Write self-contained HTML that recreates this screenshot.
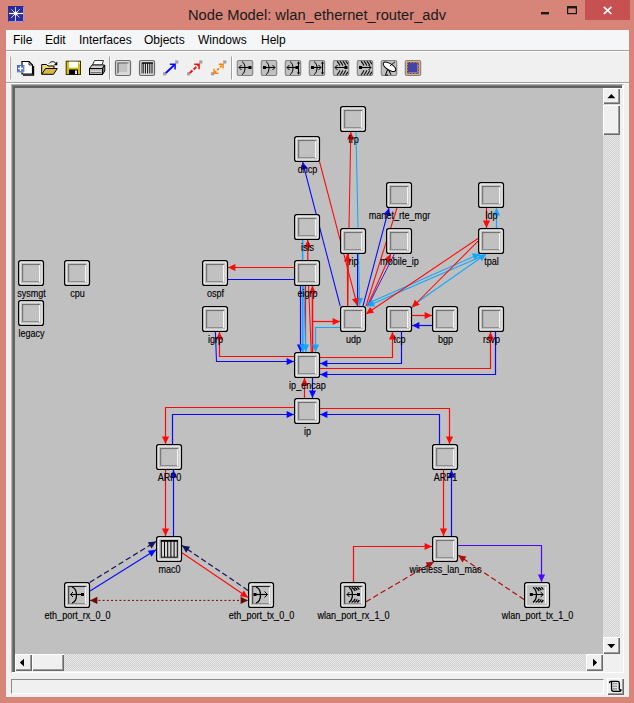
<!DOCTYPE html>
<html><head><meta charset="utf-8"><title>Node Model: wlan_ethernet_router_adv</title>
<style>
html,body{margin:0;padding:0}
body{width:634px;height:703px;overflow:hidden;background:#d68578;position:relative;font-family:"Liberation Sans",sans-serif}
.abs{position:absolute}
#title{left:0;top:6px;width:634px;text-align:center;font-size:14.7px;color:#1a1a1a;line-height:18px}
#client{left:6px;top:30px;width:623px;height:667px;background:#f0f0f0}
#menubar{left:6px;top:30px;width:623px;height:20px;background:#f5f6f7}
#menubar span{position:absolute;top:3px;font-size:12px;color:#000;line-height:14px}
#sep1{left:6px;top:50px;width:623px;height:1px;background:#a0a0a0}
#sep2{left:6px;top:51px;width:623px;height:1px;background:#fff}
#sep3{left:6px;top:82px;width:623px;height:1px;background:#a0a0a0}
#sep4{left:6px;top:83px;width:623px;height:1px;background:#fff}
#frame{left:11px;top:84px;width:613px;height:589px;box-sizing:border-box;border-top:1px solid #b0b0b0;border-left:1px solid #b0b0b0;border-right:1px solid #fff;border-bottom:1px solid #fff;background:#f0f0f0}
#frame2{left:12px;top:85px;width:610px;height:587px;box-sizing:border-box;border-top:1px solid #7c7c7c;border-left:1px solid #7c7c7c;background:#f0f0f0}
#frame3{left:13px;top:86px;width:609px;height:586px;box-sizing:border-box;border-top:2px solid #626262;border-left:2px solid #626262;background:#f0f0f0}
#canvas{left:15px;top:88px;width:588px;height:566px;background:#c0c0c0}
.track{background-color:#dcdcdc;background-image:conic-gradient(#e6e6e6 25%,#d2d2d2 0 50%,#e6e6e6 0 75%,#d2d2d2 0);background-size:2px 2px}
.btn{box-sizing:border-box;background:#f0f0f0;box-shadow:inset 1px 1px #fff,inset -1px -1px #6a6a6a,inset -2px -2px #9c9c9c}
#status{left:11px;top:679px;width:593px;height:15px;box-sizing:border-box;border-top:1px solid #8a8a8a;border-left:1px solid #8a8a8a;border-right:1px solid #fff;border-bottom:1px solid #fff;background:#f0f0f0}
svg text{font-family:"Liberation Sans",sans-serif;font-size:10.6px;fill:#000;stroke:#000;stroke-width:0.15px}
</style></head><body>
<div class="abs" id="title">Node Model: wlan_ethernet_router_adv</div>
<div class="abs" style="left:585px;top:0;width:45px;height:20px;background:#c75050"></div>
<svg class="abs" style="left:0;top:0" width="634" height="30" viewBox="0 0 634 30">
<rect x="8" y="6" width="16" height="16" fill="#2b2b9c"/><path d="M8.5,21.5 H23.5 V6.5" fill="none" stroke="#9a9ad8" stroke-width="1"/>
<path d="M9,13.5 H23" stroke="#fff" stroke-width="1.2"/><path d="M15.5,7 V21" stroke="#d0d0f0" stroke-width="1"/><path d="M11.5,9.5 L19.5,17.5 M19.8,9.2 L11.2,17.8" stroke="#e8e8ff" stroke-width="0.9"/><circle cx="15.6" cy="13.5" r="2" fill="#fff"/>
<rect x="541" y="12" width="8" height="2.4" fill="#1a1a1a"/>
<rect x="567.6" y="6.6" width="8.8" height="7" fill="none" stroke="#1a1a1a" stroke-width="1.2"/><rect x="567" y="6" width="10" height="2.4" fill="#1a1a1a"/>
<path d="M603.8,6.8 L611.4,14 M611.4,6.8 L603.8,14" stroke="#fff" stroke-width="1.7"/>
</svg>
<div class="abs" id="client"></div>
<div class="abs" id="menubar"><span style="left:7px">File</span><span style="left:39px">Edit</span><span style="left:73px">Interfaces</span><span style="left:138px">Objects</span><span style="left:192px">Windows</span><span style="left:255px">Help</span></div>
<div class="abs" id="sep1"></div><div class="abs" id="sep2"></div><div class="abs" id="sep3"></div><div class="abs" id="sep4"></div>
<!--TOOLBAR-->
<div class="abs" id="frame"></div><div class="abs" id="frame2"></div><div class="abs" id="frame3"></div>
<div class="abs" id="canvas"></div>
<div class="abs track" style="left:603px;top:88px;width:17px;height:566px"></div>
<div class="abs track" style="left:15px;top:654px;width:588px;height:17px"></div>
<div class="abs" style="left:603px;top:654px;width:17px;height:17px;background:#f0f0f0"></div>
<div class="abs btn" style="left:603px;top:88px;width:17px;height:16px"></div>
<div class="abs btn" style="left:603px;top:105px;width:17px;height:30px"></div>
<div class="abs btn" style="left:603px;top:637px;width:17px;height:17px"></div>
<div class="abs btn" style="left:15px;top:654px;width:17px;height:17px"></div>
<div class="abs btn" style="left:32px;top:654px;width:32px;height:17px"></div>
<div class="abs btn" style="left:586px;top:654px;width:17px;height:17px"></div>
<div class="abs" id="status"></div>
<div class="abs btn" style="left:607px;top:678px;width:17px;height:17px"></div>
<svg class="abs" style="left:0;top:0" width="634" height="703" viewBox="0 0 634 703">
<path d="M607.4,98.2 h8 l-4,-4.2z M607.3,644 h8 l-4,4.2z M24,658.8 v7.6 l-4.2,-3.8z M593,658.8 v7.6 l4.2,-3.8z" fill="#000"/>
<g transform="translate(0,0.7)"><path d="M611.5,681 C610,680.3 609.3,681.3 609.6,682.4 M611.5,680.7 H617.5 Q619.3,680.7 619.3,682.5 V688 Q619.3,689.8 621,689 Q621.2,690.6 619,690.6 H613.5 Q611.6,690.6 611.6,688.6 Z" fill="#e6e6e6" stroke="#000" stroke-width="1.3" stroke-linejoin="round"/>
<path d="M613.2,683 H617.6 M613.2,685.6 H617.6 M613.2,688.2 H617.6" stroke="#555" stroke-width="1.1" stroke-dasharray="1.4 0.8"/></g>
<path d="M10.5,56.5 V79.5" stroke="#a8a8a8" stroke-width="1"/><path d="M9.5,56.5 V79.5" stroke="#fff" stroke-width="1"/>
<path d="M109.5,56.5 V79.5" stroke="#a0a0a0" stroke-width="1"/><path d="M110.5,56.5 V79.5" stroke="#fff" stroke-width="1"/>
<path d="M231.5,56.5 V79.5" stroke="#a0a0a0" stroke-width="1"/><path d="M232.5,56.5 V79.5" stroke="#fff" stroke-width="1"/>
<path d="M22,61.5 H29 L32.5,65 V74 H22 Z" fill="#fff" stroke="#000" stroke-width="1.2"/><path d="M23,75.2 H33.6 V66" fill="none" stroke="#000" stroke-width="1.2"/><path d="M29,61.5 V65 H32.5" fill="none" stroke="#000" stroke-width="0.8"/>
<rect x="17" y="65" width="7" height="7" fill="#4a6ac8"/><path d="M17,72 H24 V65" stroke="#8aa0e0" fill="none" stroke-width="1"/><path d="M18,68.5 H23 M20.5,66 V71" stroke="#fff" stroke-width="1.4"/>
<path d="M41.7,74 V64.5 H46.5 L48,66 H54 V68.5" fill="#f0dc78" stroke="#000" stroke-width="1"/>
<path d="M41.7,74.3 L45.5,68.5 H57.3 L53.5,74.3 Z" fill="#d8b840" stroke="#000" stroke-width="1"/>
<path d="M49,63.5 C51,61 54.5,61 56.3,63.8" fill="none" stroke="#000" stroke-width="1"/><path d="M57.3,61.5 V65.2 H53.8 Z" fill="#000"/>
<rect x="66.2" y="61.2" width="14.3" height="13.3" fill="#d8bc10" stroke="#3a3000" stroke-width="1"/>
<rect x="69" y="61.7" width="9" height="6" fill="#fff"/><rect x="69" y="69.5" width="9" height="5" fill="#000"/><rect x="75" y="70.5" width="2" height="3.5" fill="#e8e8e8"/><rect x="78.8" y="62" width="1.2" height="1.5" fill="#fff"/>
<path d="M92.5,65 L94.5,60.5 H103.5 L102,65 Z" fill="#fff" stroke="#222" stroke-width="0.9"/>
<path d="M89.5,68.5 L92,65 H104.5 L102.5,68.5 Z" fill="#cfcfcf" stroke="#000" stroke-width="0.9"/>
<rect x="89.5" y="68.5" width="13" height="6" fill="#b8b8b8" stroke="#000" stroke-width="1"/><path d="M102.5,68.5 L104.8,65 V71 L102.5,74.5 Z" fill="#707070" stroke="#000" stroke-width="0.9"/><path d="M90.5,71.3 H101.5" stroke="#e4e4e4" stroke-width="0.9"/><path d="M90.5,72.5 H101.5" stroke="#666" stroke-width="0.9"/>
<rect x="115.5" y="60.5" width="15" height="15" rx="1.5" fill="#dadada" stroke="#6a6a6a" stroke-width="1.2"/><rect x="117.5" y="62.5" width="11" height="11" fill="#c2c2c2"/><path d="M118.0,73.5 V63 H128.5" fill="none" stroke="#585858" stroke-width="1.2"/><path d="M118.5,73 H128.0 V63.5" fill="none" stroke="#e8e8e8" stroke-width="1"/>
<rect x="139.5" y="60.5" width="15" height="15" rx="1.5" fill="#dadada" stroke="#6a6a6a" stroke-width="1.2"/><rect x="141.5" y="62.5" width="11" height="11" fill="#c2c2c2"/><path d="M142.0,73.5 V63 H152.5" fill="none" stroke="#585858" stroke-width="1.2"/><path d="M142.5,73 H152.0 V63.5" fill="none" stroke="#e8e8e8" stroke-width="1"/>
<rect x="142.5" y="63.5" width="10" height="10" fill="#dedede"/>
<path d="M143.2,63 V73.5" stroke="#000" stroke-width="0.95"/>
<path d="M145.4,63 V73.5" stroke="#000" stroke-width="0.95"/>
<path d="M147.6,63 V73.5" stroke="#000" stroke-width="0.95"/>
<path d="M149.8,63 V73.5" stroke="#000" stroke-width="0.95"/>
<path d="M152.0,63 V73.5" stroke="#000" stroke-width="0.95"/>
<path d="M142,63 H153" stroke="#000" stroke-width="1.2"/>
<rect x="163.0" y="72.2" width="3.2" height="3.2" fill="#a2a2a2"/><rect x="175.2" y="60.4" width="3.2" height="3.2" fill="#a2a2a2"/>
<path d="M165.8,73 L174.6,64.8" stroke="#0a0aff" stroke-width="1.9"/><path d="M169.8,64.3 H175.1 V69.6" fill="none" stroke="#0a0aff" stroke-width="1.5"/>
<rect x="187.0" y="72.2" width="3.2" height="3.2" fill="#a2a2a2"/><rect x="199.2" y="60.4" width="3.2" height="3.2" fill="#a2a2a2"/>
<path d="M189.8,73 L198.6,64.8" stroke="#ff0a0a" stroke-width="1.9" stroke-dasharray="3.6 1.6"/><path d="M194.2,64.3 H199.1 V69.2" fill="none" stroke="#ff0a0a" stroke-width="1.5"/>
<rect x="211.0" y="72.2" width="3.2" height="3.2" fill="#a2a2a2"/><rect x="223.2" y="60.4" width="3.2" height="3.2" fill="#a2a2a2"/>
<path d="M214.4,72.8 L222.8,64.8" stroke="#ff8000" stroke-width="1.8" stroke-dasharray="2.4 1.5"/><path d="M218.8,64.3 H223.1 V68.6" fill="none" stroke="#ff8000" stroke-width="1.4"/><path d="M214,68.8 V73.2 H218.4" fill="none" stroke="#ff8000" stroke-width="1.4"/>
<rect x="237.3" y="60.5" width="15.4" height="15" rx="1.5" fill="#c0c0c0" stroke="#808080" stroke-width="1.1"/><path d="M242.0,61.5 C246.0,64 246.0,72 242.0,74.8" fill="none" stroke="#000" stroke-width="1"/><path d="M239.0,67.5 H249.5" stroke="#000" stroke-width="1.1"/><path d="M241.5,65 L239.0,67.5 L241.5,70" fill="none" stroke="#000" stroke-width="1"/><rect x="248.5" y="66" width="3" height="3" fill="#000"/>
<rect x="261.3" y="60.5" width="15.4" height="15" rx="1.5" fill="#c0c0c0" stroke="#808080" stroke-width="1.1"/><path d="M266.0,61.5 C270.0,64 270.0,72 266.0,74.8" fill="none" stroke="#000" stroke-width="1"/><path d="M264.0,67.5 H275.0" stroke="#000" stroke-width="1.1"/><path d="M272.5,65 L275.0,67.5 L272.5,70" fill="none" stroke="#000" stroke-width="1"/><rect x="263.0" y="66" width="3" height="3" fill="#000"/>
<rect x="285.3" y="60.5" width="15.4" height="15" rx="1.5" fill="#c0c0c0" stroke="#808080" stroke-width="1.1"/><path d="M290.0,61.5 C294.0,64 294.0,72 290.0,74.8" fill="none" stroke="#000" stroke-width="1"/><path d="M287.0,67.5 H296.5" stroke="#000" stroke-width="1.1"/><path d="M289.5,65 L287.0,67.5 L289.5,70" fill="none" stroke="#000" stroke-width="1"/><rect x="295.5" y="66" width="3" height="3" fill="#000"/><path d="M298.5,62.5 V73.5" stroke="#000" stroke-width="1.1"/><path d="M297.0,63.5 l1.5,-2.2 l1.5,2.2z M297.0,72.5 l1.5,2.2 l1.5,-2.2z" fill="#000"/>
<rect x="309.3" y="60.5" width="15.4" height="15" rx="1.5" fill="#c0c0c0" stroke="#808080" stroke-width="1.1"/><path d="M314.0,61.5 C318.0,64 318.0,72 314.0,74.8" fill="none" stroke="#000" stroke-width="1"/><path d="M312.0,67.5 H321.0" stroke="#000" stroke-width="1.1"/><path d="M318.5,65 L321.0,67.5 L318.5,70" fill="none" stroke="#000" stroke-width="1"/><rect x="311.0" y="66" width="3" height="3" fill="#000"/><path d="M322.5,62.5 V73.5" stroke="#000" stroke-width="1.1"/><path d="M321.0,63.5 l1.5,-2.2 l1.5,2.2z M321.0,72.5 l1.5,2.2 l1.5,-2.2z" fill="#000"/>
<rect x="333.3" y="60.5" width="15.4" height="15" rx="1.5" fill="#c0c0c0" stroke="#808080" stroke-width="1.1"/><path d="M337.0,61.2 Q338.9,62.6 339.9,65.6" fill="none" stroke="#000" stroke-width="1.1"/><path d="M337.0,74.7 Q338.9,73.3 339.9,70.3" fill="none" stroke="#000" stroke-width="1.1"/><path d="M339.9,61.2 Q341.8,62.6 342.8,65.6" fill="none" stroke="#000" stroke-width="1.1"/><path d="M339.9,74.7 Q341.8,73.3 342.8,70.3" fill="none" stroke="#000" stroke-width="1.1"/><path d="M342.8,61.2 Q344.7,62.6 345.7,65.6" fill="none" stroke="#000" stroke-width="1.1"/><path d="M342.8,74.7 Q344.7,73.3 345.7,70.3" fill="none" stroke="#000" stroke-width="1.1"/><path d="M345.7,61.2 Q347.6,62.6 347.6,64.2" fill="none" stroke="#000" stroke-width="1.1"/><path d="M345.7,74.7 Q347.6,73.3 347.6,71.7" fill="none" stroke="#000" stroke-width="1.1"/><path d="M335.0,67.5 H345.5" stroke="#000" stroke-width="1.1"/><path d="M337.5,65 L335.0,67.5 L337.5,70" fill="none" stroke="#000" stroke-width="1"/><rect x="344.5" y="66" width="3" height="3" fill="#000"/>
<rect x="357.3" y="60.5" width="15.4" height="15" rx="1.5" fill="#c0c0c0" stroke="#808080" stroke-width="1.1"/><path d="M361.0,61.2 Q362.9,62.6 363.9,65.6" fill="none" stroke="#000" stroke-width="1.1"/><path d="M361.0,74.7 Q362.9,73.3 363.9,70.3" fill="none" stroke="#000" stroke-width="1.1"/><path d="M363.9,61.2 Q365.8,62.6 366.8,65.6" fill="none" stroke="#000" stroke-width="1.1"/><path d="M363.9,74.7 Q365.8,73.3 366.8,70.3" fill="none" stroke="#000" stroke-width="1.1"/><path d="M366.8,61.2 Q368.7,62.6 369.7,65.6" fill="none" stroke="#000" stroke-width="1.1"/><path d="M366.8,74.7 Q368.7,73.3 369.7,70.3" fill="none" stroke="#000" stroke-width="1.1"/><path d="M369.7,61.2 Q371.6,62.6 371.6,64.2" fill="none" stroke="#000" stroke-width="1.1"/><path d="M369.7,74.7 Q371.6,73.3 371.6,71.7" fill="none" stroke="#000" stroke-width="1.1"/><path d="M360.0,67.5 H371.0" stroke="#000" stroke-width="1.1"/><path d="M368.5,65 L371.0,67.5 L368.5,70" fill="none" stroke="#000" stroke-width="1"/><rect x="359.0" y="66" width="3" height="3" fill="#000"/>
<rect x="381.3" y="60.5" width="15.4" height="15" rx="1.5" fill="#c0c0c0" stroke="#808080" stroke-width="1.1"/>
<path d="M385.5,74.8 L388,68.5 L391,74.8" fill="none" stroke="#000" stroke-width="1"/><path d="M385,75 H388" stroke="#000" stroke-width="1"/>
<ellipse cx="389.5" cy="66.8" rx="7.2" ry="3.2" transform="rotate(32 389.5 66.8)" fill="#fff" stroke="#000" stroke-width="1"/><path d="M390,66 L395,61.8" stroke="#000" stroke-width="0.9"/>
<rect x="405.3" y="60.5" width="15.4" height="15" rx="1.5" fill="#c0c0c0" stroke="#808080" stroke-width="1.1"/>
<rect x="407" y="62" width="12" height="12" fill="#4444a4" stroke="#ff9a00" stroke-width="1.6" stroke-dasharray="1.6 1.4"/><path d="M408.5,72.5 H417.5 V63.5" fill="none" stroke="#7a7ad0" stroke-width="1"/>
<g id="diagram">
<polyline fill="none" stroke="#ff0808" stroke-width="1.05" points="347.5,306.0 350.8,132.0"/>
<polyline fill="none" stroke="#ff0808" stroke-width="1.4" points="347.7,306.0 347.5,254.0"/>
<polyline fill="none" stroke="#0808ff" stroke-width="1.2" points="357.6,254.0 357.6,306.0"/>
<polyline fill="none" stroke="#12a6ff" stroke-width="1.05" points="356.0,132.0 359.6,305.5"/>
<polyline fill="none" stroke="#0808ff" stroke-width="1.05" points="340.2,306.0 302.6,162.0"/>
<polyline fill="none" stroke="#ff0808" stroke-width="1.05" points="319.5,161.5 357.3,305.5"/>
<polyline fill="none" stroke="#0808ff" stroke-width="1.05" points="363.0,306.0 389.0,208.0"/>
<polyline fill="none" stroke="#ff0808" stroke-width="1.05" points="397.0,208.0 366.0,306.0"/>
<polyline fill="none" stroke="#ff0808" stroke-width="1.05" points="367.3,306.0 390.7,254.0"/>
<polyline fill="none" stroke="#3c1ee0" stroke-width="1" points="394.4,254.0 368.0,306.0"/>
<polyline fill="none" stroke="#12a6ff" stroke-width="1.05" points="366.5,304.0 480.0,253.8"/>
<polyline fill="none" stroke="#12a6ff" stroke-width="1.05" points="483.0,255.8 367.0,306.3"/>
<polyline fill="none" stroke="#12a6ff" stroke-width="1.05" points="412.0,306.0 486.0,254.0"/>
<polyline fill="none" stroke="#ff0808" stroke-width="1.05" points="478.0,238.5 366.0,314.0"/>
<polyline fill="none" stroke="#ff0808" stroke-width="1.05" points="478.0,241.2 412.0,307.5"/>
<polyline fill="none" stroke="#ff0808" stroke-width="1.2" points="486.5,208.0 486.5,228.0"/>
<polyline fill="none" stroke="#12a6ff" stroke-width="1.2" points="496.5,228.0 496.5,208.0"/>
<polyline fill="none" stroke="#0808ff" stroke-width="1.2" points="300.5,286.0 300.5,352.0"/>
<polyline fill="none" stroke="#12a6ff" stroke-width="1.5" points="302.6,240.0 302.9,352.0"/>
<polyline fill="none" stroke="#ff0808" stroke-width="1.2" points="307.8,260.0 307.8,240.0"/>
<polyline fill="none" stroke="#ff0808" stroke-width="1.2" points="305.5,286.0 305.5,345.0"/>
<polyline fill="none" stroke="#12a6ff" stroke-width="1.05" points="303.8,286.0 305.8,352.0"/>
<polyline fill="none" stroke="#ff0808" stroke-width="1.05" points="308.6,286.0 311.2,352.0"/>
<polyline fill="none" stroke="#ff0808" stroke-width="1.6" points="312.5,352.0 312.5,286.0"/>
<polyline fill="none" stroke="#ff0808" stroke-width="1.2" points="294.0,267.5 228.0,267.5"/>
<polyline fill="none" stroke="#0808ff" stroke-width="1.2" points="228.0,279.5 294.0,279.5"/>
<polyline fill="none" stroke="#ff0808" stroke-width="1.2" points="312.5,321.5 340.0,321.5"/>
<polyline fill="none" stroke="#12a6ff" stroke-width="1.2" points="340.0,327.5 315.5,327.5 315.5,352.0"/>
<polyline fill="none" stroke="#ff0808" stroke-width="1.2" points="294.0,356.5 219.5,356.5 219.5,332.0"/>
<polyline fill="none" stroke="#0808ff" stroke-width="1.05" points="215.4,332.0 216.5,361.5 294.0,361.5"/>
<polyline fill="none" stroke="#ff0808" stroke-width="1.2" points="320.0,357.5 392.5,357.5 392.5,332.0"/>
<polyline fill="none" stroke="#0808ff" stroke-width="1.2" points="401.5,332.0 401.5,363.5 320.0,363.5"/>
<polyline fill="none" stroke="#ff0808" stroke-width="1.2" points="320.0,368.5 490.5,368.5 490.5,332.0"/>
<polyline fill="none" stroke="#0808ff" stroke-width="1.2" points="495.5,332.0 495.5,374.5 320.0,374.5"/>
<polyline fill="none" stroke="#ff0808" stroke-width="1.2" points="412.0,315.5 432.0,315.5"/>
<polyline fill="none" stroke="#0808ff" stroke-width="1.2" points="432.0,325.5 412.0,325.5"/>
<polyline fill="none" stroke="#ff0808" stroke-width="1.2" points="304.5,398.0 304.5,378.0"/>
<polyline fill="none" stroke="#0808ff" stroke-width="1.2" points="312.5,378.0 312.5,398.0"/>
<polyline fill="none" stroke="#ff0808" stroke-width="1.2" points="294.0,407.5 165.5,407.5 165.5,444.0"/>
<polyline fill="none" stroke="#0808ff" stroke-width="1.2" points="172.5,444.0 172.5,414.5 294.0,414.5"/>
<polyline fill="none" stroke="#ff0808" stroke-width="1.2" points="320.0,408.5 449.5,408.5 449.5,444.0"/>
<polyline fill="none" stroke="#0808ff" stroke-width="1.2" points="439.5,444.0 439.5,414.5 320.0,414.5"/>
<polyline fill="none" stroke="#ff0808" stroke-width="1.2" points="165.5,470.0 165.5,536.0"/>
<polyline fill="none" stroke="#0808ff" stroke-width="1.2" points="173.5,536.0 173.5,470.0"/>
<polyline fill="none" stroke="#ff0808" stroke-width="1.2" points="443.5,470.0 443.5,536.0"/>
<polyline fill="none" stroke="#0808ff" stroke-width="1.2" points="451.5,536.0 451.5,470.0"/>
<polyline fill="none" stroke="#14145a" stroke-width="1.2" points="89.7,582.5 156.0,541.4" stroke-dasharray="5.5 3"/>
<polyline fill="none" stroke="#0808ff" stroke-width="1.05" points="90.0,591.0 156.0,549.8"/>
<polyline fill="none" stroke="#14145a" stroke-width="1.2" points="248.0,590.4 182.0,545.6" stroke-dasharray="5.5 3"/>
<polyline fill="none" stroke="#ff0808" stroke-width="1.05" points="182.0,552.7 248.0,597.5"/>
<polyline fill="none" stroke="#6a0a0a" stroke-width="1" points="90.0,600.4 248.0,600.4" stroke-dasharray="2 2.2"/>
<polyline fill="none" stroke="#ff0808" stroke-width="1.2" points="353.5,582.0 353.5,546.5 432.0,546.5"/>
<polyline fill="none" stroke="#b00c0c" stroke-width="1.15" points="366.0,601.7 433.8,561.8" stroke-dasharray="5.5 3"/>
<polyline fill="none" stroke="#4a08ff" stroke-width="1.2" points="458.0,545.5 541.5,545.5 541.5,582.0"/>
<polyline fill="none" stroke="#b00c0c" stroke-width="1.15" points="524.0,599.5 458.3,555.3" stroke-dasharray="5.5 3"/>
<polygon fill="#ff0808" points="350.8,132.0 354.3,139.5 347.1,139.3"/>
<polygon fill="#ff0808" points="347.5,254.0 351.1,261.4 343.9,261.4"/>
<polygon fill="#12a6ff" points="359.6,305.5 355.8,298.2 363.0,298.0"/>
<polygon fill="#0808ff" points="302.6,162.0 308.0,168.3 301.0,170.1"/>
<polygon fill="#ff0808" points="357.3,305.5 351.9,299.3 358.9,297.4"/>
<polygon fill="#0808ff" points="389.0,208.0 390.6,216.1 383.6,214.2"/>
<polygon fill="#ff0808" points="390.7,254.0 390.9,262.2 384.4,259.3"/>
<polygon fill="#12a6ff" points="480.0,253.8 474.7,260.1 471.8,253.5"/>
<polygon fill="#12a6ff" points="367.0,306.3 372.3,300.0 375.2,306.6"/>
<polygon fill="#12a6ff" points="486.0,254.0 482.0,261.2 477.9,255.3"/>
<polygon fill="#ff0808" points="366.0,314.0 370.1,306.9 374.1,312.8"/>
<polygon fill="#ff0808" points="412.0,307.5 414.7,299.7 419.8,304.8"/>
<polygon fill="#ff0808" points="486.5,228.0 482.9,220.6 490.1,220.6"/>
<polygon fill="#12a6ff" points="496.5,208.0 500.1,215.4 492.9,215.4"/>
<polygon fill="#0808ff" points="300.5,352.0 296.9,344.6 304.1,344.6"/>
<polygon fill="#12a6ff" points="302.9,352.0 299.3,344.6 306.5,344.6"/>
<polygon fill="#ff0808" points="307.8,240.0 311.4,247.4 304.2,247.4"/>
<polygon fill="#12a6ff" points="305.8,352.0 302.0,344.7 309.2,344.5"/>
<polygon fill="#ff0808" points="312.5,286.0 316.1,293.4 308.9,293.4"/>
<polygon fill="#ff0808" points="228.0,267.5 235.4,263.9 235.4,271.1"/>
<polygon fill="#ff0808" points="340.0,321.5 332.6,325.1 332.6,317.9"/>
<polygon fill="#12a6ff" points="315.5,352.0 311.9,344.6 319.1,344.6"/>
<polygon fill="#ff0808" points="219.5,332.0 223.1,339.4 215.9,339.4"/>
<polygon fill="#0808ff" points="294.0,361.5 286.6,365.1 286.6,357.9"/>
<polygon fill="#ff0808" points="392.5,332.0 396.1,339.4 388.9,339.4"/>
<polygon fill="#0808ff" points="320.0,363.5 327.4,359.9 327.4,367.1"/>
<polygon fill="#ff0808" points="490.5,332.0 494.1,339.4 486.9,339.4"/>
<polygon fill="#0808ff" points="320.0,374.5 327.4,370.9 327.4,378.1"/>
<polygon fill="#ff0808" points="432.0,315.5 424.6,319.1 424.6,311.9"/>
<polygon fill="#0808ff" points="412.0,325.5 419.4,321.9 419.4,329.1"/>
<polygon fill="#ff0808" points="304.5,378.0 308.1,385.4 300.9,385.4"/>
<polygon fill="#0808ff" points="312.5,398.0 308.9,390.6 316.1,390.6"/>
<polygon fill="#ff0808" points="165.5,444.0 161.9,436.6 169.1,436.6"/>
<polygon fill="#0808ff" points="294.0,414.5 286.6,418.1 286.6,410.9"/>
<polygon fill="#ff0808" points="449.5,444.0 445.9,436.6 453.1,436.6"/>
<polygon fill="#0808ff" points="320.0,414.5 327.4,410.9 327.4,418.1"/>
<polygon fill="#ff0808" points="165.5,536.0 161.9,528.6 169.1,528.6"/>
<polygon fill="#0808ff" points="173.5,470.0 177.1,477.4 169.9,477.4"/>
<polygon fill="#ff0808" points="443.5,536.0 439.9,528.6 447.1,528.6"/>
<polygon fill="#0808ff" points="451.5,470.0 455.1,477.4 447.9,477.4"/>
<polygon fill="#14145a" points="156.0,541.4 151.6,548.4 147.8,542.2"/>
<polygon fill="#0808ff" points="156.0,549.8 151.6,556.8 147.8,550.7"/>
<polygon fill="#14145a" points="182.0,545.6 190.1,546.8 186.1,552.7"/>
<polygon fill="#ff0808" points="248.0,597.5 239.9,596.3 243.9,590.4"/>
<polygon fill="#6a0a0a" points="248.0,600.4 240.6,604.0 240.6,596.8"/>
<polygon fill="#6a0a0a" points="90.0,600.4 97.4,596.8 97.4,604.0"/>
<polygon fill="#ff0808" points="432.0,546.5 424.6,550.1 424.6,542.9"/>
<polygon fill="#b00c0c" points="433.8,561.8 429.2,568.7 425.6,562.5"/>
<polygon fill="#4a08ff" points="541.5,582.0 537.9,574.6 545.1,574.6"/>
<polygon fill="#b00c0c" points="458.3,555.3 466.4,556.4 462.4,562.4"/>
<g transform="translate(340,106)"><rect x="0.65" y="0.65" width="24.8" height="24.8" rx="2.2" fill="#fff" stroke="#000" stroke-width="1.3"/><rect x="2.55" y="2.55" width="21" height="21" fill="#c1c1c1"/><rect x="4.2" y="4.1" width="1" height="17.9" fill="#6a6a6a"/><rect x="4.2" y="4.1" width="17.9" height="0.95" fill="#6a6a6a"/><rect x="5.2" y="21" width="16" height="0.95" fill="#8c8c8c"/><rect x="21.1" y="5.05" width="1.1" height="17" fill="#fafafa"/></g>
<g transform="translate(294,136)"><rect x="0.65" y="0.65" width="24.8" height="24.8" rx="2.2" fill="#fff" stroke="#000" stroke-width="1.3"/><rect x="2.55" y="2.55" width="21" height="21" fill="#c1c1c1"/><rect x="4.2" y="4.1" width="1" height="17.9" fill="#6a6a6a"/><rect x="4.2" y="4.1" width="17.9" height="0.95" fill="#6a6a6a"/><rect x="5.2" y="21" width="16" height="0.95" fill="#8c8c8c"/><rect x="21.1" y="5.05" width="1.1" height="17" fill="#fafafa"/></g>
<g transform="translate(386,182)"><rect x="0.65" y="0.65" width="24.8" height="24.8" rx="2.2" fill="#fff" stroke="#000" stroke-width="1.3"/><rect x="2.55" y="2.55" width="21" height="21" fill="#c1c1c1"/><rect x="4.2" y="4.1" width="1" height="17.9" fill="#6a6a6a"/><rect x="4.2" y="4.1" width="17.9" height="0.95" fill="#6a6a6a"/><rect x="5.2" y="21" width="16" height="0.95" fill="#8c8c8c"/><rect x="21.1" y="5.05" width="1.1" height="17" fill="#fafafa"/></g>
<g transform="translate(478,182)"><rect x="0.65" y="0.65" width="24.8" height="24.8" rx="2.2" fill="#fff" stroke="#000" stroke-width="1.3"/><rect x="2.55" y="2.55" width="21" height="21" fill="#c1c1c1"/><rect x="4.2" y="4.1" width="1" height="17.9" fill="#6a6a6a"/><rect x="4.2" y="4.1" width="17.9" height="0.95" fill="#6a6a6a"/><rect x="5.2" y="21" width="16" height="0.95" fill="#8c8c8c"/><rect x="21.1" y="5.05" width="1.1" height="17" fill="#fafafa"/></g>
<g transform="translate(294,214)"><rect x="0.65" y="0.65" width="24.8" height="24.8" rx="2.2" fill="#fff" stroke="#000" stroke-width="1.3"/><rect x="2.55" y="2.55" width="21" height="21" fill="#c1c1c1"/><rect x="4.2" y="4.1" width="1" height="17.9" fill="#6a6a6a"/><rect x="4.2" y="4.1" width="17.9" height="0.95" fill="#6a6a6a"/><rect x="5.2" y="21" width="16" height="0.95" fill="#8c8c8c"/><rect x="21.1" y="5.05" width="1.1" height="17" fill="#fafafa"/></g>
<g transform="translate(340,228)"><rect x="0.65" y="0.65" width="24.8" height="24.8" rx="2.2" fill="#fff" stroke="#000" stroke-width="1.3"/><rect x="2.55" y="2.55" width="21" height="21" fill="#c1c1c1"/><rect x="4.2" y="4.1" width="1" height="17.9" fill="#6a6a6a"/><rect x="4.2" y="4.1" width="17.9" height="0.95" fill="#6a6a6a"/><rect x="5.2" y="21" width="16" height="0.95" fill="#8c8c8c"/><rect x="21.1" y="5.05" width="1.1" height="17" fill="#fafafa"/></g>
<g transform="translate(386,228)"><rect x="0.65" y="0.65" width="24.8" height="24.8" rx="2.2" fill="#fff" stroke="#000" stroke-width="1.3"/><rect x="2.55" y="2.55" width="21" height="21" fill="#c1c1c1"/><rect x="4.2" y="4.1" width="1" height="17.9" fill="#6a6a6a"/><rect x="4.2" y="4.1" width="17.9" height="0.95" fill="#6a6a6a"/><rect x="5.2" y="21" width="16" height="0.95" fill="#8c8c8c"/><rect x="21.1" y="5.05" width="1.1" height="17" fill="#fafafa"/></g>
<g transform="translate(478,228)"><rect x="0.65" y="0.65" width="24.8" height="24.8" rx="2.2" fill="#fff" stroke="#000" stroke-width="1.3"/><rect x="2.55" y="2.55" width="21" height="21" fill="#c1c1c1"/><rect x="4.2" y="4.1" width="1" height="17.9" fill="#6a6a6a"/><rect x="4.2" y="4.1" width="17.9" height="0.95" fill="#6a6a6a"/><rect x="5.2" y="21" width="16" height="0.95" fill="#8c8c8c"/><rect x="21.1" y="5.05" width="1.1" height="17" fill="#fafafa"/></g>
<g transform="translate(202,260)"><rect x="0.65" y="0.65" width="24.8" height="24.8" rx="2.2" fill="#fff" stroke="#000" stroke-width="1.3"/><rect x="2.55" y="2.55" width="21" height="21" fill="#c1c1c1"/><rect x="4.2" y="4.1" width="1" height="17.9" fill="#6a6a6a"/><rect x="4.2" y="4.1" width="17.9" height="0.95" fill="#6a6a6a"/><rect x="5.2" y="21" width="16" height="0.95" fill="#8c8c8c"/><rect x="21.1" y="5.05" width="1.1" height="17" fill="#fafafa"/></g>
<g transform="translate(294,260)"><rect x="0.65" y="0.65" width="24.8" height="24.8" rx="2.2" fill="#fff" stroke="#000" stroke-width="1.3"/><rect x="2.55" y="2.55" width="21" height="21" fill="#c1c1c1"/><rect x="4.2" y="4.1" width="1" height="17.9" fill="#6a6a6a"/><rect x="4.2" y="4.1" width="17.9" height="0.95" fill="#6a6a6a"/><rect x="5.2" y="21" width="16" height="0.95" fill="#8c8c8c"/><rect x="21.1" y="5.05" width="1.1" height="17" fill="#fafafa"/></g>
<g transform="translate(202,306)"><rect x="0.65" y="0.65" width="24.8" height="24.8" rx="2.2" fill="#fff" stroke="#000" stroke-width="1.3"/><rect x="2.55" y="2.55" width="21" height="21" fill="#c1c1c1"/><rect x="4.2" y="4.1" width="1" height="17.9" fill="#6a6a6a"/><rect x="4.2" y="4.1" width="17.9" height="0.95" fill="#6a6a6a"/><rect x="5.2" y="21" width="16" height="0.95" fill="#8c8c8c"/><rect x="21.1" y="5.05" width="1.1" height="17" fill="#fafafa"/></g>
<g transform="translate(340,306)"><rect x="0.65" y="0.65" width="24.8" height="24.8" rx="2.2" fill="#fff" stroke="#000" stroke-width="1.3"/><rect x="2.55" y="2.55" width="21" height="21" fill="#c1c1c1"/><rect x="4.2" y="4.1" width="1" height="17.9" fill="#6a6a6a"/><rect x="4.2" y="4.1" width="17.9" height="0.95" fill="#6a6a6a"/><rect x="5.2" y="21" width="16" height="0.95" fill="#8c8c8c"/><rect x="21.1" y="5.05" width="1.1" height="17" fill="#fafafa"/></g>
<g transform="translate(386,306)"><rect x="0.65" y="0.65" width="24.8" height="24.8" rx="2.2" fill="#fff" stroke="#000" stroke-width="1.3"/><rect x="2.55" y="2.55" width="21" height="21" fill="#c1c1c1"/><rect x="4.2" y="4.1" width="1" height="17.9" fill="#6a6a6a"/><rect x="4.2" y="4.1" width="17.9" height="0.95" fill="#6a6a6a"/><rect x="5.2" y="21" width="16" height="0.95" fill="#8c8c8c"/><rect x="21.1" y="5.05" width="1.1" height="17" fill="#fafafa"/></g>
<g transform="translate(432,306)"><rect x="0.65" y="0.65" width="24.8" height="24.8" rx="2.2" fill="#fff" stroke="#000" stroke-width="1.3"/><rect x="2.55" y="2.55" width="21" height="21" fill="#c1c1c1"/><rect x="4.2" y="4.1" width="1" height="17.9" fill="#6a6a6a"/><rect x="4.2" y="4.1" width="17.9" height="0.95" fill="#6a6a6a"/><rect x="5.2" y="21" width="16" height="0.95" fill="#8c8c8c"/><rect x="21.1" y="5.05" width="1.1" height="17" fill="#fafafa"/></g>
<g transform="translate(478,306)"><rect x="0.65" y="0.65" width="24.8" height="24.8" rx="2.2" fill="#fff" stroke="#000" stroke-width="1.3"/><rect x="2.55" y="2.55" width="21" height="21" fill="#c1c1c1"/><rect x="4.2" y="4.1" width="1" height="17.9" fill="#6a6a6a"/><rect x="4.2" y="4.1" width="17.9" height="0.95" fill="#6a6a6a"/><rect x="5.2" y="21" width="16" height="0.95" fill="#8c8c8c"/><rect x="21.1" y="5.05" width="1.1" height="17" fill="#fafafa"/></g>
<g transform="translate(294,352)"><rect x="0.65" y="0.65" width="24.8" height="24.8" rx="2.2" fill="#fff" stroke="#000" stroke-width="1.3"/><rect x="2.55" y="2.55" width="21" height="21" fill="#c1c1c1"/><rect x="4.2" y="4.1" width="1" height="17.9" fill="#6a6a6a"/><rect x="4.2" y="4.1" width="17.9" height="0.95" fill="#6a6a6a"/><rect x="5.2" y="21" width="16" height="0.95" fill="#8c8c8c"/><rect x="21.1" y="5.05" width="1.1" height="17" fill="#fafafa"/></g>
<g transform="translate(294,398)"><rect x="0.65" y="0.65" width="24.8" height="24.8" rx="2.2" fill="#fff" stroke="#000" stroke-width="1.3"/><rect x="2.55" y="2.55" width="21" height="21" fill="#c1c1c1"/><rect x="4.2" y="4.1" width="1" height="17.9" fill="#6a6a6a"/><rect x="4.2" y="4.1" width="17.9" height="0.95" fill="#6a6a6a"/><rect x="5.2" y="21" width="16" height="0.95" fill="#8c8c8c"/><rect x="21.1" y="5.05" width="1.1" height="17" fill="#fafafa"/></g>
<g transform="translate(156,444)"><rect x="0.65" y="0.65" width="24.8" height="24.8" rx="2.2" fill="#fff" stroke="#000" stroke-width="1.3"/><rect x="2.55" y="2.55" width="21" height="21" fill="#c1c1c1"/><rect x="4.2" y="4.1" width="1" height="17.9" fill="#6a6a6a"/><rect x="4.2" y="4.1" width="17.9" height="0.95" fill="#6a6a6a"/><rect x="5.2" y="21" width="16" height="0.95" fill="#8c8c8c"/><rect x="21.1" y="5.05" width="1.1" height="17" fill="#fafafa"/></g>
<g transform="translate(432,444)"><rect x="0.65" y="0.65" width="24.8" height="24.8" rx="2.2" fill="#fff" stroke="#000" stroke-width="1.3"/><rect x="2.55" y="2.55" width="21" height="21" fill="#c1c1c1"/><rect x="4.2" y="4.1" width="1" height="17.9" fill="#6a6a6a"/><rect x="4.2" y="4.1" width="17.9" height="0.95" fill="#6a6a6a"/><rect x="5.2" y="21" width="16" height="0.95" fill="#8c8c8c"/><rect x="21.1" y="5.05" width="1.1" height="17" fill="#fafafa"/></g>
<g transform="translate(156,536)"><rect x="0.65" y="0.65" width="24.8" height="24.8" rx="2.2" fill="#fff" stroke="#000" stroke-width="1.3"/><rect x="2.55" y="2.55" width="21" height="21" fill="#c1c1c1"/><rect x="5.3" y="4.6" width="16" height="16.6" fill="#d6d6d6" stroke="#000" stroke-width="1"/><path d="M4.8,4.9 H21.8" stroke="#000" stroke-width="1.7"/><path d="M8.5,5 V21" stroke="#000" stroke-width="1"/><path d="M11.7,5 V21" stroke="#000" stroke-width="1"/><path d="M14.9,5 V21" stroke="#000" stroke-width="1"/><path d="M18.1,5 V21" stroke="#000" stroke-width="1"/></g>
<g transform="translate(432,536)"><rect x="0.65" y="0.65" width="24.8" height="24.8" rx="2.2" fill="#fff" stroke="#000" stroke-width="1.3"/><rect x="2.55" y="2.55" width="21" height="21" fill="#c1c1c1"/><rect x="4.2" y="4.1" width="1" height="17.9" fill="#6a6a6a"/><rect x="4.2" y="4.1" width="17.9" height="0.95" fill="#6a6a6a"/><rect x="5.2" y="21" width="16" height="0.95" fill="#8c8c8c"/><rect x="21.1" y="5.05" width="1.1" height="17" fill="#fafafa"/></g>
<g transform="translate(64,582)"><rect x="0.65" y="0.65" width="24.8" height="24.8" rx="2.2" fill="#fff" stroke="#000" stroke-width="1.3"/><rect x="2.55" y="2.55" width="21" height="21" fill="#c1c1c1"/><rect x="4.2" y="4.1" width="1" height="17.9" fill="#333"/><rect x="4.2" y="4.1" width="17.9" height="0.95" fill="#333"/><rect x="5.2" y="21" width="16" height="0.95" fill="#8c8c8c"/><rect x="21.1" y="5.05" width="1.1" height="17" fill="#fafafa"/><path d="M4.5,4.5 H21" stroke="#222" stroke-width="1" fill="none"/><path d="M8,5 C14,7 14,19 8,21" fill="none" stroke="#000" stroke-width="1.3"/><path d="M6.5,12.5 H18" stroke="#000" stroke-width="1.1"/><path d="M9,10 L6.5,12.5 L9,15" fill="none" stroke="#000" stroke-width="1"/><rect x="17" y="11" width="3" height="3" fill="#000"/></g>
<g transform="translate(248,582)"><rect x="0.65" y="0.65" width="24.8" height="24.8" rx="2.2" fill="#fff" stroke="#000" stroke-width="1.3"/><rect x="2.55" y="2.55" width="21" height="21" fill="#c1c1c1"/><rect x="4.2" y="4.1" width="1" height="17.9" fill="#333"/><rect x="4.2" y="4.1" width="17.9" height="0.95" fill="#333"/><rect x="5.2" y="21" width="16" height="0.95" fill="#8c8c8c"/><rect x="21.1" y="5.05" width="1.1" height="17" fill="#fafafa"/><path d="M4.5,4.5 H21" stroke="#222" stroke-width="1" fill="none"/><path d="M8,5 C14,7 14,19 8,21" fill="none" stroke="#000" stroke-width="1.3"/><path d="M7,12.5 H19.5" stroke="#000" stroke-width="1.1"/><path d="M16.5,9.5 L19.5,12.5 L16.5,15.5" fill="none" stroke="#000" stroke-width="1"/><rect x="5.5" y="11" width="3" height="3" fill="#000"/></g>
<g transform="translate(340,582)"><rect x="0.65" y="0.65" width="24.8" height="24.8" rx="2.2" fill="#fff" stroke="#000" stroke-width="1.3"/><rect x="2.55" y="2.55" width="21" height="21" fill="#c1c1c1"/><rect x="4.2" y="4.1" width="1" height="17.9" fill="#333"/><rect x="4.2" y="4.1" width="17.9" height="0.95" fill="#333"/><rect x="5.2" y="21" width="16" height="0.95" fill="#8c8c8c"/><rect x="21.1" y="5.05" width="1.1" height="17" fill="#fafafa"/><path d="M4.5,4.5 H21" stroke="#222" stroke-width="1" fill="none"/><path d="M9,5.3 C13.6,8.5 13.6,17.2 9,20.4" fill="none" stroke="#000" stroke-width="1.3"/><path d="M11.6,5.3 Q14.3,6.6 15.2,9 M14.4,5.3 Q16.6,6.4 17.2,8.3 M17.2,5.3 Q18.8,6.2 19.2,7.7" fill="none" stroke="#000" stroke-width="1.3"/><path d="M11.6,20.4 Q14.3,19.1 15.2,16.7 M14.4,20.4 Q16.6,19.3 17.2,17.4 M17.2,20.4 Q18.8,19.5 19.2,18" fill="none" stroke="#000" stroke-width="1.3"/><path d="M7,12.5 H18" stroke="#000" stroke-width="1.1"/><path d="M9.5,10 L7,12.5 L9.5,15" fill="none" stroke="#000" stroke-width="1"/><rect x="17" y="11" width="3" height="3" fill="#000"/></g>
<g transform="translate(524,582)"><rect x="0.65" y="0.65" width="24.8" height="24.8" rx="2.2" fill="#fff" stroke="#000" stroke-width="1.3"/><rect x="2.55" y="2.55" width="21" height="21" fill="#c1c1c1"/><rect x="21" y="5" width="1.2" height="16.5" fill="#fff"/><path d="M9,5.3 C13.6,8.5 13.6,17.2 9,20.4" fill="none" stroke="#000" stroke-width="1.3"/><path d="M11.6,5.3 Q14.3,6.6 15.2,9 M14.4,5.3 Q16.6,6.4 17.2,8.3 M17.2,5.3 Q18.8,6.2 19.2,7.7" fill="none" stroke="#000" stroke-width="1.3"/><path d="M11.6,20.4 Q14.3,19.1 15.2,16.7 M14.4,20.4 Q16.6,19.3 17.2,17.4 M17.2,20.4 Q18.8,19.5 19.2,18" fill="none" stroke="#000" stroke-width="1.3"/><path d="M7,12.5 H19" stroke="#000" stroke-width="1.1"/><path d="M16.5,10 L19.3,12.5 L16.5,15" fill="none" stroke="#000" stroke-width="1"/><rect x="5.8" y="11" width="3" height="3" fill="#000"/></g>
<g transform="translate(18,260)"><rect x="0.65" y="0.65" width="24.8" height="24.8" rx="2.2" fill="#fff" stroke="#000" stroke-width="1.3"/><rect x="2.55" y="2.55" width="21" height="21" fill="#c1c1c1"/><rect x="4.2" y="4.1" width="1" height="17.9" fill="#6a6a6a"/><rect x="4.2" y="4.1" width="17.9" height="0.95" fill="#6a6a6a"/><rect x="5.2" y="21" width="16" height="0.95" fill="#8c8c8c"/><rect x="21.1" y="5.05" width="1.1" height="17" fill="#fafafa"/></g>
<g transform="translate(64,260)"><rect x="0.65" y="0.65" width="24.8" height="24.8" rx="2.2" fill="#fff" stroke="#000" stroke-width="1.3"/><rect x="2.55" y="2.55" width="21" height="21" fill="#c1c1c1"/><rect x="4.2" y="4.1" width="1" height="17.9" fill="#6a6a6a"/><rect x="4.2" y="4.1" width="17.9" height="0.95" fill="#6a6a6a"/><rect x="5.2" y="21" width="16" height="0.95" fill="#8c8c8c"/><rect x="21.1" y="5.05" width="1.1" height="17" fill="#fafafa"/></g>
<g transform="translate(18,300)"><rect x="0.65" y="0.65" width="24.8" height="24.8" rx="2.2" fill="#fff" stroke="#000" stroke-width="1.3"/><rect x="2.55" y="2.55" width="21" height="21" fill="#c1c1c1"/><rect x="4.2" y="4.1" width="1" height="17.9" fill="#6a6a6a"/><rect x="4.2" y="4.1" width="17.9" height="0.95" fill="#6a6a6a"/><rect x="5.2" y="21" width="16" height="0.95" fill="#8c8c8c"/><rect x="21.1" y="5.05" width="1.1" height="17" fill="#fafafa"/></g>
<text transform="translate(353.5,142.8) scale(0.855,1)" text-anchor="middle">frp</text>
<text transform="translate(307.5,172.8) scale(0.855,1)" text-anchor="middle">dhcp</text>
<text transform="translate(399.5,218.8) scale(0.855,1)" text-anchor="middle">manet_rte_mgr</text>
<text transform="translate(491.5,218.8) scale(0.855,1)" text-anchor="middle">ldp</text>
<text transform="translate(307.5,250.8) scale(0.855,1)" text-anchor="middle">isis</text>
<text transform="translate(353.5,264.8) scale(0.855,1)" text-anchor="middle">rip</text>
<text transform="translate(399.5,264.8) scale(0.855,1)" text-anchor="middle">mobile_ip</text>
<text transform="translate(491.5,264.8) scale(0.855,1)" text-anchor="middle">tpal</text>
<text transform="translate(215.5,296.8) scale(0.855,1)" text-anchor="middle">ospf</text>
<text transform="translate(307.5,296.8) scale(0.855,1)" text-anchor="middle">eigrp</text>
<text transform="translate(215.5,342.8) scale(0.855,1)" text-anchor="middle">igrp</text>
<text transform="translate(353.5,342.8) scale(0.855,1)" text-anchor="middle">udp</text>
<text transform="translate(399.5,342.8) scale(0.855,1)" text-anchor="middle">tcp</text>
<text transform="translate(445.5,342.8) scale(0.855,1)" text-anchor="middle">bgp</text>
<text transform="translate(491.5,342.8) scale(0.855,1)" text-anchor="middle">rsvp</text>
<text transform="translate(307.5,388.8) scale(0.855,1)" text-anchor="middle">ip_encap</text>
<text transform="translate(307.5,434.8) scale(0.855,1)" text-anchor="middle">ip</text>
<text transform="translate(169.5,480.8) scale(0.855,1)" text-anchor="middle">ARP0</text>
<text transform="translate(445.5,480.8) scale(0.855,1)" text-anchor="middle">ARP1</text>
<text transform="translate(169.5,572.8) scale(0.855,1)" text-anchor="middle">mac0</text>
<text transform="translate(445.5,572.8) scale(0.855,1)" text-anchor="middle">wireless_lan_mac</text>
<text transform="translate(77.5,618.8) scale(0.855,1)" text-anchor="middle">eth_port_rx_0_0</text>
<text transform="translate(261.5,618.8) scale(0.855,1)" text-anchor="middle">eth_port_tx_0_0</text>
<text transform="translate(353.5,618.8) scale(0.855,1)" text-anchor="middle">wlan_port_rx_1_0</text>
<text transform="translate(537.5,618.8) scale(0.855,1)" text-anchor="middle">wlan_port_tx_1_0</text>
<text transform="translate(31.5,296.8) scale(0.855,1)" text-anchor="middle">sysmgt</text>
<text transform="translate(77.5,296.8) scale(0.855,1)" text-anchor="middle">cpu</text>
<text transform="translate(31.5,336.8) scale(0.855,1)" text-anchor="middle">legacy</text>
</g>
</svg>
</body></html>
